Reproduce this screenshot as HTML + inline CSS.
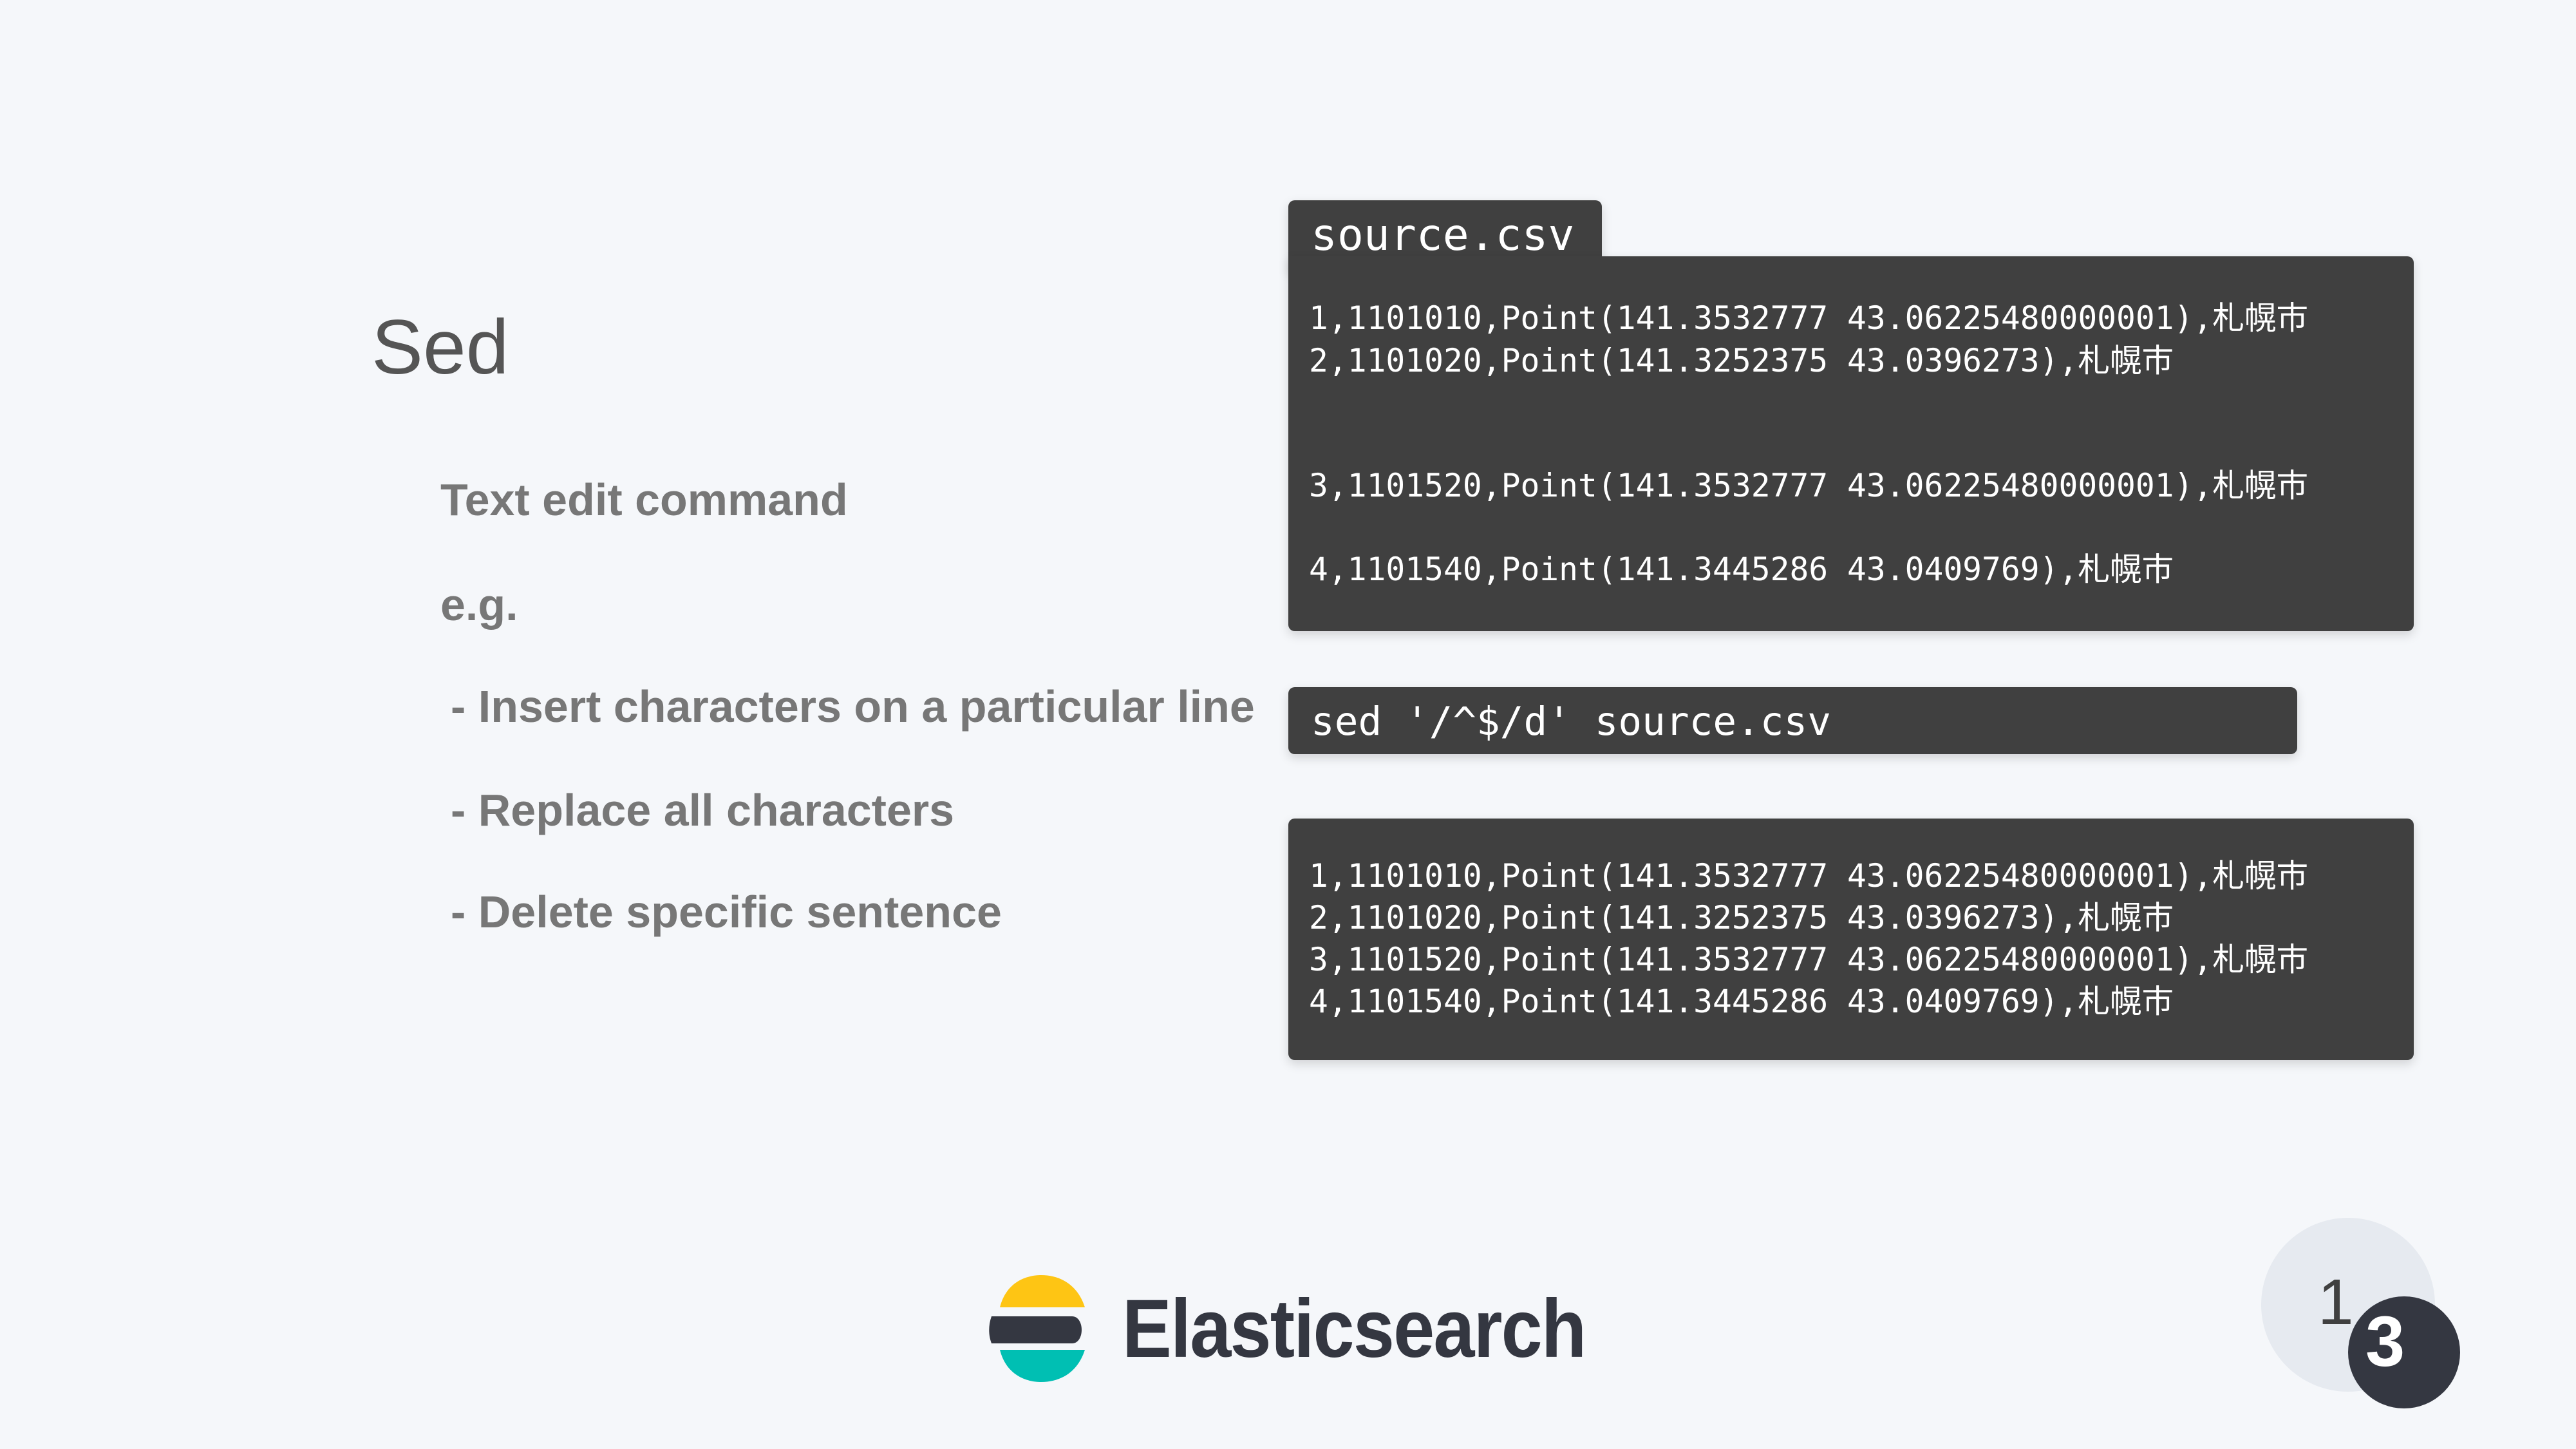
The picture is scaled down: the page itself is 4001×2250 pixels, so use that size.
<!DOCTYPE html>
<html><head><meta charset="utf-8"><style>
body{margin:0;width:4001px;height:2250px;background:#f5f7fa;position:relative;overflow:hidden;font-family:"Liberation Sans","Noto Sans CJK JP",sans-serif}
.a{position:absolute}
.t{color:#777;font-size:70px;font-weight:bold;white-space:nowrap;line-height:1}
.m{font-family:"DejaVu Sans Mono","Liberation Mono","Noto Sans CJK JP",monospace;color:#fff;white-space:pre}
.box{background:#404040;border-radius:10px;box-shadow:0 6px 16px rgba(0,0,0,.15)}
</style></head><body>
<div class="a" style="left:577px;top:470px;font-size:120px;color:#555;">Sed</div>
<div class="a t" style="left:684px;top:741px">Text edit command</div>
<div class="a t" style="left:684px;top:904px">e.g.</div>
<div class="a t" style="left:700px;top:1062px">- Insert characters on a particular line</div>
<div class="a t" style="left:700px;top:1223px">- Replace all characters</div>
<div class="a t" style="left:700px;top:1381px">- Delete specific sentence</div>

<div class="a box" style="left:2001px;top:311px;width:487px;height:110px;border-radius:10px 10px 0 0"></div>
<div class="a m" style="left:2036px;top:326px;font-size:68px;line-height:80px">source.csv</div>
<div class="a box" style="left:2001px;top:398px;width:1748px;height:582px;border-radius:0 10px 10px 10px"></div>
<div class="a m" style="left:2033px;top:461px;font-size:49.6px;line-height:66px">1,1101010,Point(141.3532777 43.06225480000001),札幌市
2,1101020,Point(141.3252375 43.0396273),札幌市</div>
<div class="a m" style="left:2033px;top:721px;font-size:49.6px;line-height:66px">3,1101520,Point(141.3532777 43.06225480000001),札幌市</div>
<div class="a m" style="left:2033px;top:851px;font-size:49.6px;line-height:66px">4,1101540,Point(141.3445286 43.0409769),札幌市</div>

<div class="a box" style="left:2001px;top:1067px;width:1567px;height:104px"></div>
<div class="a m" style="left:2036px;top:1081px;font-size:61px;line-height:80px">sed '/^$/d' source.csv</div>

<div class="a box" style="left:2001px;top:1271px;width:1748px;height:375px"></div>
<div class="a m" style="left:2033px;top:1328px;font-size:49.6px;line-height:65px">1,1101010,Point(141.3532777 43.06225480000001),札幌市
2,1101020,Point(141.3252375 43.0396273),札幌市
3,1101520,Point(141.3532777 43.06225480000001),札幌市
4,1101540,Point(141.3445286 43.0409769),札幌市</div>

<svg class="a" style="left:1535px;top:1978px" width="160" height="170" viewBox="0 0 160 170">
<path d="M18 52 C28 12 60 2 82 2 C115 2 140 20 150 52 Z" fill="#fec514"/>
<path d="M5 66 H130 C150 66 150 108 130 108 H5 C0 95 0 80 5 66Z" fill="#343741"/>
<path d="M18 118 H150 C140 150 115 168 82 168 C60 168 28 158 18 118Z" fill="#00bfb3"/>
</svg>
<div class="a" style="left:1743px;top:1990px;font-size:128px;font-weight:bold;color:#343741;letter-spacing:-2px;transform:scaleX(0.9);transform-origin:0 0">Elasticsearch</div>

<div class="a" style="left:3512px;top:1891px;width:270px;height:270px;border-radius:50%;background:#e6eaf0"></div>
<div class="a" style="left:3600px;top:1965px;font-size:100px;color:#404040">1</div>
<div class="a" style="left:3647px;top:2013px;width:174px;height:174px;border-radius:50%;background:#343741"></div>
<div class="a" style="left:3674px;top:2020px;font-size:110px;font-weight:bold;color:#fff">3</div>
</body></html>
